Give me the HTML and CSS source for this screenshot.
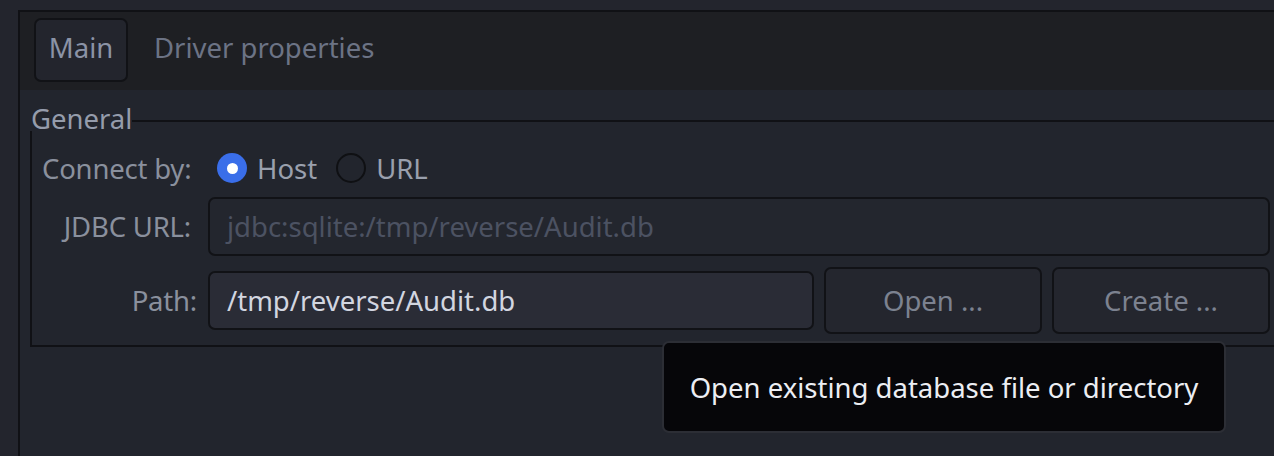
FILE: index.html
```html
<!DOCTYPE html>
<html lang="en">
<head>
<meta charset="utf-8">
<title>Connection settings</title>
<link rel="stylesheet" href="styles.css">
</head>
<body>
<div class="frame">
  <div class="tabbar">
    <div class="tab tab-active">Main</div>
    <div class="tab">Driver properties</div>
  </div>
  <div class="content">
    <div class="group">
      <div class="group-head">
        <span class="group-title">General</span>
        <span class="group-line"></span>
      </div>
      <div class="group-body">
        <div class="row row-radio">
          <div class="label">Connect by:</div>
          <div class="radios">
            <div class="radio-item"><span class="radio radio-on"></span><span class="radio-text">Host</span></div>
            <div class="radio-item"><span class="radio"></span><span class="radio-text">URL</span></div>
          </div>
        </div>
        <div class="row row-url">
          <div class="label">JDBC URL:</div>
          <div class="input input-disabled">jdbc:sqlite:/tmp/reverse/Audit.db</div>
        </div>
        <div class="row row-path">
          <div class="label">Path:</div>
          <div class="input input-path">/tmp/reverse/Audit.db</div>
          <div class="button">Open ...</div>
          <div class="button">Create ...</div>
        </div>
      </div>
    </div>
  </div>
</div>
<div class="tooltip">Open existing database file or directory</div>
</body>
</html>
```

FILE: styles.css
```css
html, body {
  margin: 0;
  padding: 0;
  overflow: hidden;
}
body {
  width: 1274px;
  height: 456px;
  background: #23252d;
  font-family: "Noto Sans", "Open Sans", sans-serif;
  font-size: 27.5px;
  position: relative;
}
.frame {
  margin: 10px 0 0 18px;
  width: 1280px;
  height: 446px;
  border-top: 2px solid #101115;
  border-left: 2px solid #101115;
  display: flex;
  flex-direction: column;
}
.tabbar {
  height: 78px;
  box-sizing: border-box;
  background: #1e1f23;
  padding: 6px 0 0 14px;
  display: flex;
  align-items: flex-start;
  gap: 11px;
}
.tab {
  height: 64px;
  box-sizing: border-box;
  padding: 0 13px 4px;
  border: 2px solid transparent;
  border-radius: 7px;
  display: flex;
  align-items: center;
  color: #6c7385;
  line-height: 1;
  white-space: nowrap;
}
.tab-active {
  width: 94px;
  justify-content: center;
  padding: 0 0 4px;
  border-color: #111216;
  background: #23252d;
  color: #8b93a6;
}
.content {
  flex: 1;
  background: #22252d;
  padding: 17px 18px 0 10px;
}
.group-head {
  display: flex;
  height: 24px;
}
.group-title {
  color: #959cab;
  line-height: 24px;
  padding-left: 1px;
}
.group-line {
  flex: 1;
  align-self: flex-start;
  margin-top: 13px;
  border-top: 2px solid #101115;
}
.group-body {
  border: 2px solid #101115;
  border-top: none;
  padding: 22px 10px 11px 10px;
  display: flex;
  flex-direction: column;
}
.row {
  display: flex;
  align-items: center;
}
.label {
  width: 149px;
  margin-right: 17px;
  text-align: right;
  color: #8a909d;
  flex: none;
  white-space: nowrap;
  letter-spacing: -0.2px;
}
.row-radio {
  height: 30px;
}
.radios {
  display: flex;
  align-items: center;
  padding-left: 9px;
  gap: 19px;
}
.radio-item {
  display: flex;
  align-items: center;
  gap: 10px;
}
.radio {
  width: 30px;
  height: 30px;
  box-sizing: border-box;
  border-radius: 50%;
  border: 2px solid #0f1013;
  display: flex;
  align-items: center;
  justify-content: center;
}
.radio-on {
  border: none;
  background: #3a6ee9;
}
.radio-on::after {
  content: "";
  width: 11px;
  height: 11px;
  border-radius: 50%;
  background: #ffffff;
}
.radio-text {
  color: #9aa0ad;
}
.row-url {
  margin-top: 14px;
}
.input {
  height: 59px;
  box-sizing: border-box;
  border: 2px solid #111216;
  border-radius: 7px;
  padding: 0 17px;
  display: flex;
  align-items: center;
  flex: 1;
  white-space: nowrap;
  overflow: hidden;
}
.input-disabled {
  background: #23262e;
  color: #4c5262;
}
.row-path {
  margin-top: 11px;
  height: 67px;
  gap: 10px;
}
.row-path .label {
  width: 155px;
  margin-right: 1px;
}
.input-path {
  background: #2a2c36;
  color: #d2d6e0;
}
.button {
  width: 218px;
  height: 67px;
  box-sizing: border-box;
  border: 2px solid #111216;
  border-radius: 7px;
  background: #24262e;
  color: #7c8290;
  display: flex;
  align-items: center;
  justify-content: center;
  flex: none;
}
.tooltip {
  position: absolute;
  left: 662px;
  top: 341px;
  width: 564px;
  height: 92px;
  box-sizing: border-box;
  background: #060609;
  border: 2px solid #2c2e35;
  border-radius: 7px;
  color: #eceef3;
  display: flex;
  align-items: center;
  justify-content: center;
}
```
